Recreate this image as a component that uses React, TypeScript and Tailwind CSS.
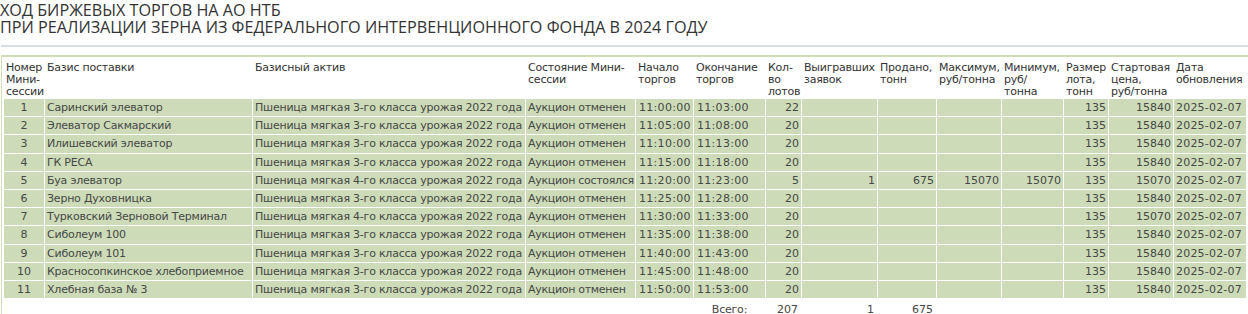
import React from "react";

interface Row {
  n: number;
  basis: string;
  asset: string;
  state: string;
  start: string;
  end: string;
  lots: number;
  won?: number;
  sold?: number;
  max?: number;
  min?: number;
  size: number;
  price: number;
  date: string;
}

const A3 = "Пшеница мягкая 3-го класса урожая 2022 года";
const A4 = "Пшеница мягкая 4-го класса урожая 2022 года";
const OFF = "Аукцион отменен";

const rows: Row[] = [
  { n: 1, basis: "Саринский элеватор", asset: A3, state: OFF, start: "11:00:00", end: "11:03:00", lots: 22, size: 135, price: 15840, date: "2025-02-07" },
  { n: 2, basis: "Элеватор Сакмарский", asset: A3, state: OFF, start: "11:05:00", end: "11:08:00", lots: 20, size: 135, price: 15840, date: "2025-02-07" },
  { n: 3, basis: "Илишевский элеватор", asset: A3, state: OFF, start: "11:10:00", end: "11:13:00", lots: 20, size: 135, price: 15840, date: "2025-02-07" },
  { n: 4, basis: "ГК РЕСА", asset: A3, state: OFF, start: "11:15:00", end: "11:18:00", lots: 20, size: 135, price: 15840, date: "2025-02-07" },
  { n: 5, basis: "Буа элеватор", asset: A4, state: "Аукцион состоялся", start: "11:20:00", end: "11:23:00", lots: 5, won: 1, sold: 675, max: 15070, min: 15070, size: 135, price: 15070, date: "2025-02-07" },
  { n: 6, basis: "Зерно Духовницка", asset: A3, state: OFF, start: "11:25:00", end: "11:28:00", lots: 20, size: 135, price: 15840, date: "2025-02-07" },
  { n: 7, basis: "Турковский Зерновой Терминал", asset: A4, state: OFF, start: "11:30:00", end: "11:33:00", lots: 20, size: 135, price: 15070, date: "2025-02-07" },
  { n: 8, basis: "Сиболеум 100", asset: A3, state: OFF, start: "11:35:00", end: "11:38:00", lots: 20, size: 135, price: 15840, date: "2025-02-07" },
  { n: 9, basis: "Сиболеум 101", asset: A3, state: OFF, start: "11:40:00", end: "11:43:00", lots: 20, size: 135, price: 15840, date: "2025-02-07" },
  { n: 10, basis: "Красносопкинское хлебоприемное", asset: A3, state: OFF, start: "11:45:00", end: "11:48:00", lots: 20, size: 135, price: 15840, date: "2025-02-07" },
  { n: 11, basis: "Хлебная база № 3", asset: A3, state: OFF, start: "11:50:00", end: "11:53:00", lots: 20, size: 135, price: 15840, date: "2025-02-07" },
];

// column widths measured off the reference
const widths = [40, 207, 272, 109, 57, 71, 35, 75, 58, 64, 61, 44, 64, 72];

// header lines broken where the reference breaks them
const headers: string[][] = [
  ["Номер", "Мини-", "сессии"],
  ["Базис поставки"],
  ["Базисный актив"],
  ["Состояние Мини-", "сессии"],
  ["Начало", "торгов"],
  ["Окончание", "торгов"],
  ["Кол-", "во", "лотов"],
  ["Выигравших", "заявок"],
  ["Продано,", "тонн"],
  ["Максимум,", "руб/тонна"],
  ["Минимум,", "руб/", "тонна"],
  ["Размер", "лота,", "тонн"],
  ["Стартовая", "цена,", "руб/тонна"],
  ["Дата", "обновления"],
];

const td = "h-[17.2px] bg-[#cddbb8] px-[2px] py-0 whitespace-nowrap overflow-hidden";
const num = `${td} text-right tracking-normal`;

export default function App() {
  return (
    <div className="w-[1248px] bg-white text-[#474747]">
      {/* title */}
      <div className="h-[35px] pt-[2px] font-['Open_Sans',sans-serif] text-[16.2px] leading-[16.5px] text-[#333]">
        <div>ХОД БИРЖЕВЫХ ТОРГОВ НА АО НТБ</div>
        <div>ПРИ РЕАЛИЗАЦИИ ЗЕРНА ИЗ ФЕДЕРАЛЬНОГО ИНТЕРВЕНЦИОННОГО ФОНДА В 2024 ГОДУ</div>
      </div>
      <div className="mt-[10px] ml-[1px] h-[2px] bg-[#d7dde3]" />

      {/* table box */}
      <div className="mt-[8px] ml-[1px] border-l border-t-2 border-[#cfdeb5] pl-[1px]">
        <table className="w-[1244px] table-fixed border-separate border-spacing-[1px] font-['DejaVu_Sans',sans-serif] text-[11px] leading-[13px] tracking-[-0.22px]">
          <colgroup>
            {widths.map((w, i) => (
              <col key={i} style={{ width: w }} />
            ))}
          </colgroup>
          <thead>
            <tr>
              {headers.map((h, i) => (
                <th key={i} className="px-[2px] pt-[4px] pb-0 text-left align-top font-normal leading-[12px] text-[#333] whitespace-nowrap">
                  {h.map((line, j) => (
                    <div key={j}>{line}</div>
                  ))}
                </th>
              ))}
            </tr>
          </thead>
          <tbody>
            {rows.map(r => (
              <tr key={r.n}>
                <td className={`${td} text-center tracking-normal`}>{r.n}</td>
                <td className={td}>{r.basis}</td>
                <td className={td}>{r.asset}</td>
                <td className={`${td} tracking-[-0.3px]`}>{r.state}</td>
                <td className={`${td} pl-[3px] tracking-[0.3px]`}>{r.start}</td>
                <td className={`${td} pl-[3px] tracking-[0.3px]`}>{r.end}</td>
                <td className={num}>{r.lots}</td>
                <td className={num}>{r.won ?? ""}</td>
                <td className={num}>{r.sold ?? ""}</td>
                <td className={num}>{r.max ?? ""}</td>
                <td className={num}>{r.min ?? ""}</td>
                <td className={num}>{r.size}</td>
                <td className={num}>{r.price}</td>
                <td className={`${td} tracking-[0.2px]`}>{r.date}</td>
              </tr>
            ))}
            <tr>
              <td colSpan={5} />
              <td className="h-[17px] px-[3px] pt-[3px] text-center">Всего:</td>
              <td className="px-[3px] pt-[3px] text-right tracking-normal">207</td>
              <td className="px-[3px] pt-[3px] text-right tracking-normal">1</td>
              <td className="px-[3px] pt-[3px] text-right tracking-normal">675</td>
              <td colSpan={5} />
            </tr>
          </tbody>
        </table>
      </div>
    </div>
  );
}
